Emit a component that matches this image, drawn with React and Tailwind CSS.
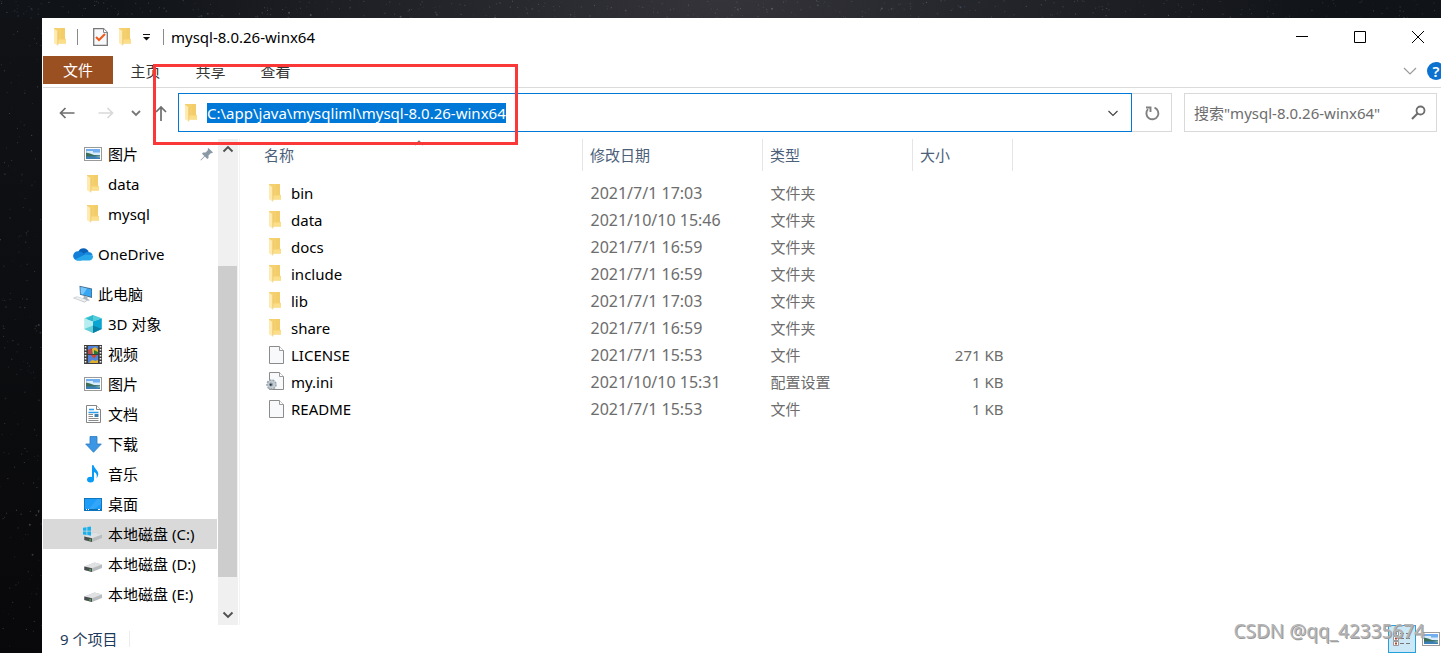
import React from "react";

const FILES = [
  { name: "bin", date: "2021/7/1 17:03", type: "文件夹", size: "", icon: "folder" },
  { name: "data", date: "2021/10/10 15:46", type: "文件夹", size: "", icon: "folder" },
  { name: "docs", date: "2021/7/1 16:59", type: "文件夹", size: "", icon: "folder" },
  { name: "include", date: "2021/7/1 16:59", type: "文件夹", size: "", icon: "folder" },
  { name: "lib", date: "2021/7/1 17:03", type: "文件夹", size: "", icon: "folder" },
  { name: "share", date: "2021/7/1 16:59", type: "文件夹", size: "", icon: "folder" },
  { name: "LICENSE", date: "2021/7/1 15:53", type: "文件", size: "271 KB", icon: "file" },
  { name: "my.ini", date: "2021/10/10 15:31", type: "配置设置", size: "1 KB", icon: "ini" },
  { name: "README", date: "2021/7/1 15:53", type: "文件", size: "1 KB", icon: "file" },
];

function Folder() {
  return (
    <svg width="12" height="18" viewBox="0 0 12 18" className="shrink-0" aria-hidden="true">
      <path d="M0 0H11V10.500L12 11.500V15.500H3.500L0 14Z" fill="#f5d06f" />
      <path d="M7 0H11V10.500H7Z" fill="#f3cd6a" />
      <path d="M4 11.500H12V15.500H4Z" fill="#fbdf88" />
      <path d="M0 .8L3.800 3.200V17.600L0 15.200Z" fill="#ffeab0" />
      <path d="M3.800 3.200V17.400" stroke="#e5bb5d" strokeWidth=".6" />
    </svg>
  );
}

function FileSheet() {
  return (
    <svg width="15" height="18" viewBox="0 0 15 18" className="shrink-0" aria-hidden="true">
      <path d="M.5.5H10.500L14.500 4.500V17.500H.5Z" fill="#f8f9fa" stroke="#8b8b8b" />
      <path d="M10.500.5V4.500H14.500" fill="#fff" stroke="#9a9a9a" />
    </svg>
  );
}

function IniFile() {
  return (
    <svg width="18" height="19" viewBox="0 0 18 19" className="shrink-0" aria-hidden="true">
      <path d="M3.500.5H13.500L17.500 4.500V17.500H3.500Z" fill="#f8f9fa" stroke="#8b8b8b" />
      <path d="M13.500.5V4.500H17.500" fill="#fff" stroke="#9a9a9a" />
      <circle cx="5.500" cy="12.500" r="4.500" fill="#c3ccd3" stroke="#9aa5ae" strokeWidth="1.600" strokeDasharray="1.900 1.200" />
      <circle cx="5" cy="12.500" r="2" fill="#8a97a2" />
      <circle cx="4.700" cy="12.700" r="1" fill="#1d2c38" />
    </svg>
  );
}

function Picture() {
  return (
    <svg width="18" height="14" viewBox="0 0 18 14" aria-hidden="true">
      <rect x=".5" y=".5" width="17" height="13" fill="#fff" stroke="#9a9a9a" />
      <rect x="2" y="2" width="14" height="10" fill="#71aef0" />
      <path d="M3 4H9V5.500H16V8H2V5Z" fill="#d8ecfb" />
      <path d="M2 5.500L6 6.500L10 8L16 8.500V10H2Z" fill="#3d6f58" />
      <path d="M2 9.500L16 9V12H2Z" fill="#3b7fb5" />
      <path d="M11 10L16 9V10.500Z" fill="#8cb798" />
    </svg>
  );
}

function Cloud() {
  return (
    <svg width="20" height="14" viewBox="0 0 20 14" aria-hidden="true">
      <path d="M5.500 4.500A5.400 5.400 0 0 1 15.500 4.700L17 9L4 9Z" fill="#0a62b8" />
      <path d="M4.500 13.500A4.500 4.500 0 0 1 5 4.300Q8 4 10 6L14 10L8 13.500Z" fill="#1280d8" />
      <path d="M11 6.600Q13 4.700 15.500 4.900A4.300 4.300 0 0 1 19.600 8L14 11Z" fill="#1989df" />
      <path d="M2 12.500L12 7.500Q18 8 19.800 8.500A3.800 3.800 0 0 1 16.500 13.500H4.500Q3 13.500 2 12.500Z" fill="#28a8ea" />
    </svg>
  );
}

function Computer() {
  return (
    <svg width="20" height="18" viewBox="0 0 20 18" aria-hidden="true">
      <path d="M6.500.8L19 3.400V13L7 9.800Z" fill="#456f91" />
      <path d="M7.500 2L18.200 4.200V11.800L7.800 9Z" fill="#35a7f5" />
      <path d="M7.500 2L14 3.400L10 9.600L7.800 9Z" fill="#78c6fa" />
      <path d="M11 10.800L14.500 11.800V14L17 15L15.500 15.700L10 14.200Z" fill="#aab4bb" />
      <path d="M.5 13L4 11.700L14.500 15.200L11.500 17.200Z" fill="#d8dcdf" stroke="#b5bbc0" strokeWidth=".5" />
      <path d="M2.500 12.900L12 16M4 12.300L13 15.300" stroke="#fff" strokeWidth=".6" />
    </svg>
  );
}

function Cube() {
  return (
    <svg width="18" height="18" viewBox="0 0 18 18" aria-hidden="true">
      <path d="M9 0L17.800 3.200L9 6.500L.2 3.200Z" fill="#53ccdc" />
      <path d="M.2 3.200L9 6.500V18L.2 14Z" fill="#b5edf0" />
      <path d="M9 6.500L17.800 3.200V14L9 18Z" fill="#0ba5d1" />
      <path d="M.2 14L9 10.500V18Z" fill="#65d0d8" />
      <path d="M9 10.500L17.800 14L9 18Z" fill="#077fa9" />
      <path d="M9 0L2.500 4L9 6.500Z" fill="#2fb9cc" />
    </svg>
  );
}

function Film() {
  return (
    <svg width="18" height="19" viewBox="0 0 18 19" aria-hidden="true">
      <rect width="18" height="19" fill="#3e3e3e" />
      <rect x="4" y="1" width="10" height="8" fill="#4f83dc" />
      <rect x="4" y="10" width="10" height="8" fill="#4f83dc" />
      <path d="M1.500 1V19M16.500 1V19" stroke="#f2f2f2" strokeWidth="1.600" strokeDasharray="1.500 1.500" />
      <path d="M4 5L8 3V9H4Z" fill="#b54a4a" />
      <path d="M8 4Q12 0 14 5V9H9Z" fill="#e9b72b" />
      <path d="M10 5L14 7V9H10Z" fill="#2c7a35" />
      <path d="M7 10H13L10 13.500Z" fill="#d64528" />
      <path d="M5 18Q8 13 11 16L14 15V18Z" fill="#ddb02e" />
    </svg>
  );
}

function Doc() {
  return (
    <svg width="15" height="18" viewBox="0 0 15 18" aria-hidden="true">
      <path d="M.5.5H10.500L14.500 4.500V17.500H.5Z" fill="#fff" stroke="#858585" />
      <path d="M10.500.5V4.500H14.500" fill="#fff" stroke="#858585" />
      <path d="M3 4.500H8M2.500 7.500H12.500" stroke="#2e9be6" strokeWidth="1.300" />
      <path d="M2.500 9.500H7M2.500 11.500H7M2.500 13.500H12.500M2.500 15.500H12.500" stroke="#8b8b8b" />
      <rect x="8.500" y="9" width="4" height="3" fill="#3c7eab" />
    </svg>
  );
}

function Download() {
  return (
    <svg width="17" height="17" viewBox="0 0 17 17" aria-hidden="true">
      <path d="M5 .5H12V8H16.300L8.500 16.300L.7 8H5Z" fill="#3b97e6" stroke="#2b78bd" strokeWidth=".8" />
    </svg>
  );
}

function Music() {
  return (
    <svg width="12" height="18" viewBox="0 0 12 18" aria-hidden="true">
      <ellipse cx="3.500" cy="14.600" rx="3.500" ry="2.900" fill="#0a9bf5" />
      <path d="M5 .3H6.700C7.200 4 11.200 5 11.300 9Q11.300 11.500 9.500 13.500Q10.800 8.500 7 7V15H5Z" fill="#0a9bf5" />
    </svg>
  );
}

function Desktop() {
  return (
    <svg width="18" height="13" viewBox="0 0 18 13" aria-hidden="true">
      <rect x=".5" y=".5" width="17" height="12" fill="#1d9df7" stroke="#0f75bd" />
      <path d="M13 1H17V6L10 11H5Z" fill="#33a6fa" />
      <path d="M1 11.500H17" stroke="#0c6cae" />
      <path d="M2 11.500H3M4 11.500H5M14 11.500H16" stroke="#fff" />
    </svg>
  );
}

function Drive({ system }) {
  return (
    <svg width="20" height="20" viewBox="0 0 20 20" aria-hidden="true">
      <path d="M1.300 12.500L11.500 8.500L19 10.500V14L9 18L1.300 16Z" fill="#b9bcbf" />
      <path d="M1.300 12.500L11.500 8.500L19 10.500L9 14.300Z" fill="#dfe1e3" />
      <path d="M1.300 12.500L9 14.300V18L1.300 16Z" fill="#4a4d4f" />
      <path d="M6.500 15.800L7.800 16.100" stroke="#4fe04f" strokeWidth="1.400" />
      {system && (
        <path
          d="M0 3.700L3.500 3.200V6.700H0ZM4.300 3.100L8 2.500V6.700H4.300ZM0 7.500H3.500V11L0 10.500ZM4.300 7.500H8V11.700L4.300 11.100Z"
          fill="#17b1ee"
        />
      )}
    </svg>
  );
}

function Chevron({ up, className }) {
  return (
    <svg width="12" height="12" viewBox="0 0 12 12" fill="none" stroke="currentColor" strokeWidth="1.200" className={className} aria-hidden="true">
      <path d={up ? "M2 8L6 4L10 8" : "M1.500 4L6 8.500L10.500 4"} />
    </svg>
  );
}

const TREE = [
  [
    { label: "图片", icon: <Picture />, pinned: true },
    { label: "data", icon: <Folder /> },
    { label: "mysql", icon: <Folder /> },
  ],
  [{ label: "OneDrive", icon: <Cloud />, root: true }],
  [
    { label: "此电脑", icon: <Computer />, root: true },
    { label: "3D 对象", icon: <Cube /> },
    { label: "视频", icon: <Film /> },
    { label: "图片", icon: <Picture /> },
    { label: "文档", icon: <Doc /> },
    { label: "下载", icon: <Download /> },
    { label: "音乐", icon: <Music /> },
    { label: "桌面", icon: <Desktop /> },
    { label: "本地磁盘 (C:)", icon: <Drive system />, selected: true },
    { label: "本地磁盘 (D:)", icon: <Drive /> },
    { label: "本地磁盘 (E:)", icon: <Drive /> },
  ],
];

// Deterministic scatter of stars for the wallpaper.
const STARS = Array.from({ length: 560 }, (_, i) => {
  const inTop = i % 3 !== 0;
  const a = (Math.sin(i * 12.9898) * 43758.5453) % 1;
  const b = (Math.sin(i * 78.233) * 12543.123) % 1;
  return {
    x: Math.abs(a) * (inTop ? 1441 : 42),
    y: Math.abs(b) * (inTop ? 18 : 653),
    o: 0.08 + (i % 7) * 0.04,
    r: i % 17 === 0 ? 1 : 0.6,
  };
});

function Wallpaper() {
  return (
    <svg className="absolute inset-0" width="100%" height="100%" aria-hidden="true">
      <defs>
        <radialGradient id="glow" cx="50%" cy="0%" r="42%">
          <stop offset="0" stopColor="#34343a" />
          <stop offset="1" stopColor="#101318" />
        </radialGradient>
        <linearGradient id="shade" x1="0" y1="0" x2="0" y2="1">
          <stop offset="0" stopColor="#101215" />
          <stop offset="1" stopColor="#08080a" />
        </linearGradient>
      </defs>
      <rect width="100%" height="100%" fill="url(#glow)" />
      <rect y="18" width="42" height="100%" fill="url(#shade)" />
      {STARS.map((s, i) => (
        <circle key={i} cx={s.x} cy={s.y} r={s.r} fill={i % 5 ? "#aab0b8" : "#7d97c4"} opacity={s.o} />
      ))}
    </svg>
  );
}

function TitleBar() {
  return (
    <header className="flex h-[38px] items-center pl-[11px]">
      <Folder />
      <span className="ml-[11px] h-4 w-px bg-[#8a8a8a]" />
      <button aria-label="属性" className="ml-[15px]">
        <svg width="15" height="18" viewBox="0 0 15 18" aria-hidden="true">
          <path d="M.7.700H10.500L14.300 4.500V17.300H.7Z" fill="#f7f8fa" stroke="#777" strokeWidth="1.300" />
          <path d="M10.500.7V4.500H14.300" fill="#fff" stroke="#888" />
          <path d="M3 9L6 12L12 6" fill="none" stroke="#f0591b" strokeWidth="2" />
        </svg>
      </button>
      <button aria-label="新建文件夹" className="ml-[11px]">
        <Folder />
      </button>
      <button aria-label="自定义快速访问工具栏" className="ml-[11px]">
        <svg width="9" height="8" viewBox="0 0 9 8" aria-hidden="true">
          <path d="M1 1.500H8" stroke="#111" />
          <path d="M1 4H8L4.500 7.500Z" fill="#111" />
        </svg>
      </button>
      <span className="ml-3 h-4 w-px bg-[#8a8a8a]" />
      <h1 className="ml-[7px] flex-1 text-black">mysql-8.0.26-winx64</h1>
      <div className="-mr-[6px] flex shrink-0 self-stretch text-black">
        <button aria-label="最小化" className="flex w-[58px] items-center justify-center">
          <svg width="12" height="12" viewBox="0 0 12 12" stroke="currentColor"><path d="M0 5.500H12" /></svg>
        </button>
        <button aria-label="最大化" className="flex w-[58px] items-center justify-center">
          <svg width="12" height="12" viewBox="0 0 12 12" fill="none" stroke="currentColor"><path d="M.5.5H11.500V11.500H.5Z" /></svg>
        </button>
        <button aria-label="关闭" className="flex w-[58px] items-center justify-center">
          <svg width="12" height="12" viewBox="0 0 12 12" stroke="currentColor"><path d="M0 0L12 12M12 0L0 12" /></svg>
        </button>
      </div>
    </header>
  );
}

function Ribbon() {
  return (
    <nav className="flex h-8 items-start border-b border-[#dadbdc]">
      <button className="h-7 w-[70px] bg-[#9b5021] text-white">文件</button>
      {["主页", "共享", "查看"].map((t) => (
        <button key={t} className="h-[30px] w-[65px] text-[#333]">{t}</button>
      ))}
      <div className="-mr-1 ml-auto flex h-[30px] items-center gap-[10px]">
        <button aria-label="展开功能区" className="text-[#9a9a9a]">
          <svg width="14" height="14" viewBox="0 0 14 14" fill="none" stroke="currentColor" strokeWidth="1.200"><path d="M1 4L7 10L13 4" /></svg>
        </button>
        <button aria-label="帮助" className="flex size-[18px] items-center justify-center rounded-full bg-[#0b72cf] font-semibold leading-none text-white">?</button>
      </div>
    </nav>
  );
}

function AddressRow() {
  return (
    <div className="flex h-[51px] items-start pt-[5px] pr-1">
      <div className="flex h-[39px] w-[135px] shrink-0 items-center pl-4">
        <button aria-label="后退" className="text-[#6e6e6e]">
          <svg width="16" height="14" viewBox="0 0 16 14" fill="none" stroke="currentColor" strokeWidth="1.700"><path d="M15.500 7H1.500M6.500 2L1.500 7L6.500 12" /></svg>
        </button>
        <button aria-label="前进" className="ml-[23px] text-[#d9d9d9]">
          <svg width="16" height="14" viewBox="0 0 16 14" fill="none" stroke="currentColor" strokeWidth="1.700"><path d="M.5 7H14.500M9.500 2L14.500 7L9.500 12" /></svg>
        </button>
        <button aria-label="最近位置" className="ml-4 text-[#777]">
          <svg width="12" height="12" viewBox="0 0 12 12" fill="none" stroke="currentColor" strokeWidth="1.800"><path d="M2 4L6 8L10 4" /></svg>
        </button>
        <button aria-label="上移" className="ml-3 shrink-0 text-[#6e6e6e]">
          <svg width="14" height="18" viewBox="0 0 14 18" fill="none" stroke="currentColor" strokeWidth="1.700"><path d="M7 17V3M2 8L7 3L12 8" /></svg>
        </button>
      </div>
      <div className="flex h-[39px] min-w-0 flex-1 items-center border border-[#0078d7] pr-3 pl-[6px]">
        <Folder />
        <input
          aria-label="地址"
          readOnly
          value="C:\app\java\mysqliml\mysql-8.0.26-winx64"
          className="ml-[10px] h-5 min-w-0 bg-[#0078d7] text-white outline-none [field-sizing:content]"
        />
        <button aria-label="历史记录" className="ml-auto text-[#444]">
          <Chevron />
        </button>
      </div>
      <button aria-label="刷新" className="flex h-[39px] w-10 shrink-0 items-center justify-center border border-l-0 border-[#d9d9d9] text-[#808080]">
        <svg width="16" height="16" viewBox="0 0 16 16" fill="none" stroke="currentColor" strokeWidth="1.900">
          <path d="M10.500 2.700A6 6 0 1 1 4 4.200" />
          <path d="M2 2.500H6.500V7" />
        </svg>
      </button>
      <label className="ml-3 flex h-[39px] w-[253px] shrink-0 items-center border border-[#d9d9d9] pr-[10px] pl-[9px]">
        <input
          aria-label="搜索"
          placeholder={'搜索"mysql-8.0.26-winx64"'}
          className="h-5 min-w-0 flex-1 outline-none placeholder:text-[#6d6d6d]"
        />
        <svg width="15" height="15" viewBox="0 0 15 15" fill="none" stroke="#6e6e6e" aria-hidden="true">
          <circle cx="9.500" cy="5.500" r="4" strokeWidth="1.800" />
          <path d="M6.500 8.500L1 14" strokeWidth="2.200" />
        </svg>
      </label>
    </div>
  );
}

function Sidebar() {
  return (
    <nav className="flex w-[175px] shrink-0 flex-col gap-[10px]">
      {TREE.map((group, g) => (
        <ul key={g}>
          {group.map((n, i) => (
            <li key={i}>
              <a
                href="#"
                className={
                  "mr-px flex h-[30px] items-center text-black " +
                  (n.root ? "pl-[30px] " : "pl-10 ") +
                  (n.selected ? "bg-[#d9d9d9]" : "")
                }
              >
                <span className="flex w-5 shrink-0 items-center justify-center">{n.icon}</span>
                <span className="ml-[5px] flex-1 whitespace-nowrap">{n.label}</span>
                {n.pinned && (
                  <svg width="14" height="14" viewBox="0 0 14 14" className="mr-[3px]" fill="#8a99a6" aria-hidden="true">
                    <path d="M8.500 1L13 5.500L11.800 6.300L11 6L8.500 8.500V11L7.300 12L4.800 9.500L1 13.500L.5 13L4.300 9L2 6.700L3 5.500H5.500L8 3L7.700 1.800Z" />
                  </svg>
                )}
              </a>
            </li>
          ))}
        </ul>
      ))}
    </nav>
  );
}

function ScrollBar() {
  return (
    <div className="flex w-5 shrink-0 flex-col bg-[#f0f0f0] text-[#505050]">
      <button aria-label="向上滚动" className="flex h-5 items-center justify-center">
        <svg width="12" height="12" viewBox="0 0 12 12" fill="none" stroke="currentColor" strokeWidth="1.900"><path d="M1.500 8.500L6 4L10.500 8.500" /></svg>
      </button>
      <div className="mt-[107px] mr-px mb-7 flex-1 bg-[#cdcdcd]" />
      <button aria-label="向下滚动" className="flex h-5 items-center justify-center">
        <svg width="12" height="12" viewBox="0 0 12 12" fill="none" stroke="currentColor" strokeWidth="1.900"><path d="M1.500 3.500L6 8L10.500 3.500" /></svg>
      </button>
    </div>
  );
}

function FileTable() {
  return (
    <div className="ml-px min-w-0 flex-1 border-l border-[#f3f3f3]">
      <table className="w-[773px] table-fixed border-collapse text-left text-[#6d6d6d]">
        <colgroup>
          <col />
          <col className="w-[180px]" />
          <col className="w-[150px]" />
          <col className="w-[100px]" />
        </colgroup>
        <thead className="text-[#4c607a]">
          <tr className="h-8">
            <th className="border-r border-[#e5e5e5] pl-6 font-normal">
              <div className="relative">
                名称
                <Chevron up className="absolute -top-2 left-[149px] text-[#777]" />
              </div>
            </th>
            <th className="border-r border-[#e5e5e5] pl-[7px] font-normal">修改日期</th>
            <th className="border-r border-[#e5e5e5] pl-[7px] font-normal">类型</th>
            <th className="border-r border-[#e5e5e5] pl-[7px] font-normal">大小</th>
          </tr>
        </thead>
        <tbody className="before:block before:h-2">
          {FILES.map((f) => (
            <tr key={f.name} className="h-[27px]">
              <td className="p-0">
                <div className="flex items-center text-black">
                  <span className={"flex w-[51px] shrink-0 " + (f.icon === "ini" ? "pl-[26px]" : f.icon === "file" ? "pl-[29px]" : "pl-[29px]")}>
                    {f.icon === "folder" ? <Folder /> : f.icon === "file" ? <FileSheet /> : <IniFile />}
                  </span>
                  {f.name}
                </div>
              </td>
              <td className="p-0 pl-2 text-base leading-5">{f.date}</td>
              <td className="p-0 pl-2">{f.type}</td>
              <td className="p-0 pr-[9px] text-right">{f.size}</td>
            </tr>
          ))}
        </tbody>
      </table>
    </div>
  );
}

function StatusBar() {
  return (
    <footer className="flex h-7 items-center pl-[17px] text-[#1e395b]">
      <span>9 个项目</span>
      <span className="ml-3 h-4 w-px bg-[#ececec]" />
      <div className="ml-auto flex items-center gap-[6px] self-stretch pr-px">
        <button aria-label="详细信息" className="flex h-7 w-7 items-center justify-center border border-[#26a0da] bg-[#cce8f6]">
          <svg width="18" height="16" viewBox="0 0 18 16" fill="none" aria-hidden="true">
            <path d="M.5.500H5.500V4.500H.5ZM.5 5.500H5.500V9.500H.5ZM.5 10.500H5.500V14.500H.5Z" fill="#fff" stroke="#999" />
            <path d="M2 2.500H4" stroke="#347bc0" strokeWidth="2" />
            <path d="M2 7.500H4M2 12.500H4" stroke="#c33c26" strokeWidth="2" />
            <path d="M7 2.500H11M13 2.500H17M7 7.500H11M13 7.500H17M7 12.500H11M13 12.500H17" stroke="#777" />
          </svg>
        </button>
        <button aria-label="大图标">
          <Picture />
        </button>
      </div>
    </footer>
  );
}

export default function App() {
  return (
    <div className="relative flex min-h-screen overflow-hidden bg-[#0f1116] pt-[18px] pl-[42px] font-['Noto_Sans','Noto_Sans_CJK_SC',sans-serif] text-[15px] leading-5">
      <Wallpaper />
      <main className="relative flex min-w-0 flex-1 flex-col overflow-hidden border-l border-white bg-white">
        <TitleBar />
        <Ribbon />
        <AddressRow />
        <div className="flex flex-1">
          <Sidebar />
          <ScrollBar />
          <FileTable />
        </div>
        <StatusBar />
      </main>
      <div className="pointer-events-none absolute top-16 left-[153px] h-[81px] w-[365px] border-[3px] border-[#fb3838]" />
      <p className="pointer-events-none absolute right-4 bottom-2 text-[19px] leading-7 text-[#b4b4b4] [text-shadow:1px_1px_0_#999999]">
        CSDN @qq_42335674
      </p>
    </div>
  );
}
